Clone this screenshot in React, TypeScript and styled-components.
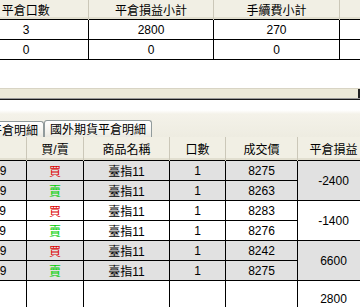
import { createGlobalStyle, styled } from 'styled-components';

const Global = createGlobalStyle`
    html, body {
        margin: 0;
        padding: 0;
        background: #fff;
    }
    body {
        width: 360px;
        height: 307px;
        overflow: hidden;
        font-family: "Liberation Sans", "Noto Sans CJK TC", sans-serif;
        font-size: 12px;
        color: #000;
    }
`;

const S = {
    Page: styled.div`
        display: flex;
        flex-direction: column;
        width: 360px;
        height: 307px;
        overflow: hidden;
    `,
    TopPane: styled.div`
        height: 88px;
        overflow: hidden;
        background: #fff;
    `,
    Scroller: styled.div<{ $offset: number }>`
        overflow: hidden;
        > table {
            margin-left: ${(p) => -p.$offset}px;
        }
    `,
    Grid: styled.table<{ $width: number }>`
        border-collapse: collapse;
        table-layout: fixed;
        width: ${(p) => p.$width}px;
    `,
    Head: styled.th<{ $h: number }>`
        height: ${(p) => p.$h}px;
        padding: 0;
        background: #f1efe4;
        box-shadow: inset 0 -2px 0 #e2dfd0;
        border-right: 1px solid #cbc7b8;
        font-weight: normal;
        text-align: center;
        white-space: nowrap;
        overflow: hidden;
    `,
    Cell: styled.td<{ $shade?: boolean; $h?: number }>`
        height: ${(p) => p.$h ?? 19}px;
        padding: 0;
        border: 1px solid #000;
        background: ${(p) => (p.$shade ? '#e1e1e1' : '#fff')};
        text-align: center;
        white-space: nowrap;
        overflow: hidden;
    `,
    Side: styled.span<{ $buy: boolean }>`
        color: ${(p) => (p.$buy ? '#dd0000' : '#00d000')};
    `,
    Splitter: styled.div`
        height: 10px;
        background: #ece9d8;
        border-top: 1px solid #d8d4c4;
        display: flex;
        justify-content: flex-end;
        box-sizing: border-box;
    `,
    Grip: styled.div`
        width: 2px;
        background: #222;
    `,
    Rule: styled.div`
        height: 2px;
        background: #1a1a1a;
        border-top: 1px solid #9a9a9a;
        box-sizing: border-box;
    `,
    TabStrip: styled.div`
        height: 37px;
        display: flex;
        align-items: flex-end;
        overflow: hidden;
        background: linear-gradient(#fff 0, #fff 10px, #f4f2e9 14px, #eeece1 100%);
    `,
    Tab: styled.div<{ $active?: boolean; $shift?: number }>`
        flex: none;
        height: ${(p) => (p.$active ? 16 : 15)}px;
        margin-left: ${(p) => p.$shift ?? 0}px;
        padding: 0 5px;
        border: 1px solid #919b9c;
        border-bottom: none;
        border-radius: 3px 3px 0 0;
        background: linear-gradient(#ffffff, #f3f2ec 70%, #e9e8e1);
        font-family: "Noto Sans CJK TC", sans-serif;
        line-height: ${(p) => (p.$active ? 16 : 15)}px;
        white-space: nowrap;
    `,
    BottomPane: styled.div`
        flex: 1;
        overflow: hidden;
        background: #fff;
    `,
};

const summary = { closed: '3', pnl: '2800', fee: '270' };

const groups = [
    {
        pnl: '-2400',
        shade: true,
        trades: [
            { time: '10:32:09', buy: true, price: '8275' },
            { time: '10:41:09', buy: false, price: '8263' },
        ],
    },
    {
        pnl: '-1400',
        shade: false,
        trades: [
            { time: '11:05:09', buy: true, price: '8283' },
            { time: '11:12:09', buy: false, price: '8276' },
        ],
    },
    {
        pnl: '6600',
        shade: true,
        trades: [
            { time: '12:20:09', buy: true, price: '8242' },
            { time: '13:01:09', buy: false, price: '8275' },
        ],
    },
];

const topCols = [125, 125, 126, 124];
const bottomCols = [87, 57, 86, 56, 72, 72];

function SummaryGrid() {
    return (
        <S.Scroller $offset={37}>
            <S.Grid $width={500}>
                <colgroup>
                    {topCols.map((w, i) => (
                        <col key={i} style={{ width: w }} />
                    ))}
                </colgroup>
                <thead>
                    <tr>
                        <S.Head $h={19}>平倉口數</S.Head>
                        <S.Head $h={19}>平倉損益小計</S.Head>
                        <S.Head $h={19}>手續費小計</S.Head>
                        <S.Head $h={19} />
                    </tr>
                </thead>
                <tbody>
                    <tr>
                        <S.Cell>{summary.closed}</S.Cell>
                        <S.Cell>{summary.pnl}</S.Cell>
                        <S.Cell>{summary.fee}</S.Cell>
                        <S.Cell />
                    </tr>
                    <tr>
                        <S.Cell>0</S.Cell>
                        <S.Cell>0</S.Cell>
                        <S.Cell>0</S.Cell>
                        <S.Cell />
                    </tr>
                </tbody>
            </S.Grid>
        </S.Scroller>
    );
}

function DetailGrid() {
    return (
        <S.Scroller $offset={61}>
            <S.Grid $width={430}>
                <colgroup>
                    {bottomCols.map((w, i) => (
                        <col key={i} style={{ width: w }} />
                    ))}
                </colgroup>
                <thead>
                    <tr>
                        <S.Head $h={23}>時間</S.Head>
                        <S.Head $h={23}>買/賣</S.Head>
                        <S.Head $h={23}>商品名稱</S.Head>
                        <S.Head $h={23}>口數</S.Head>
                        <S.Head $h={23}>成交價</S.Head>
                        <S.Head $h={23}>平倉損益</S.Head>
                    </tr>
                </thead>
                <tbody>
                    {groups.map((g) =>
                        g.trades.map((t, i) => (
                            <tr key={t.time}>
                                <S.Cell $shade={g.shade}>{t.time}</S.Cell>
                                <S.Cell $shade={g.shade}>
                                    <S.Side $buy={t.buy}>{t.buy ? '買' : '賣'}</S.Side>
                                </S.Cell>
                                <S.Cell $shade={g.shade}>臺指11</S.Cell>
                                <S.Cell $shade={g.shade}>1</S.Cell>
                                <S.Cell $shade={g.shade}>{t.price}</S.Cell>
                                {i === 0 && (
                                    <S.Cell $shade={g.shade} rowSpan={2}>
                                        {g.pnl}
                                    </S.Cell>
                                )}
                            </tr>
                        )),
                    )}
                    <tr>
                        <S.Cell $h={35} />
                        <S.Cell $h={35} />
                        <S.Cell $h={35} />
                        <S.Cell $h={35} />
                        <S.Cell $h={35} />
                        <S.Cell $h={35}>2800</S.Cell>
                    </tr>
                </tbody>
            </S.Grid>
        </S.Scroller>
    );
}

export default function App() {
    return (
        <>
            <Global />
            <S.Page>
                <S.TopPane>
                    <SummaryGrid />
                </S.TopPane>
                <S.Splitter>
                    <S.Grip />
                </S.Splitter>
                <S.Rule />
                <S.TabStrip>
                    <S.Tab $shift={-64}>國內期貨平倉明細</S.Tab>
                    <S.Tab $active>國外期貨平倉明細</S.Tab>
                </S.TabStrip>
                <S.BottomPane>
                    <DetailGrid />
                </S.BottomPane>
            </S.Page>
        </>
    );
}
